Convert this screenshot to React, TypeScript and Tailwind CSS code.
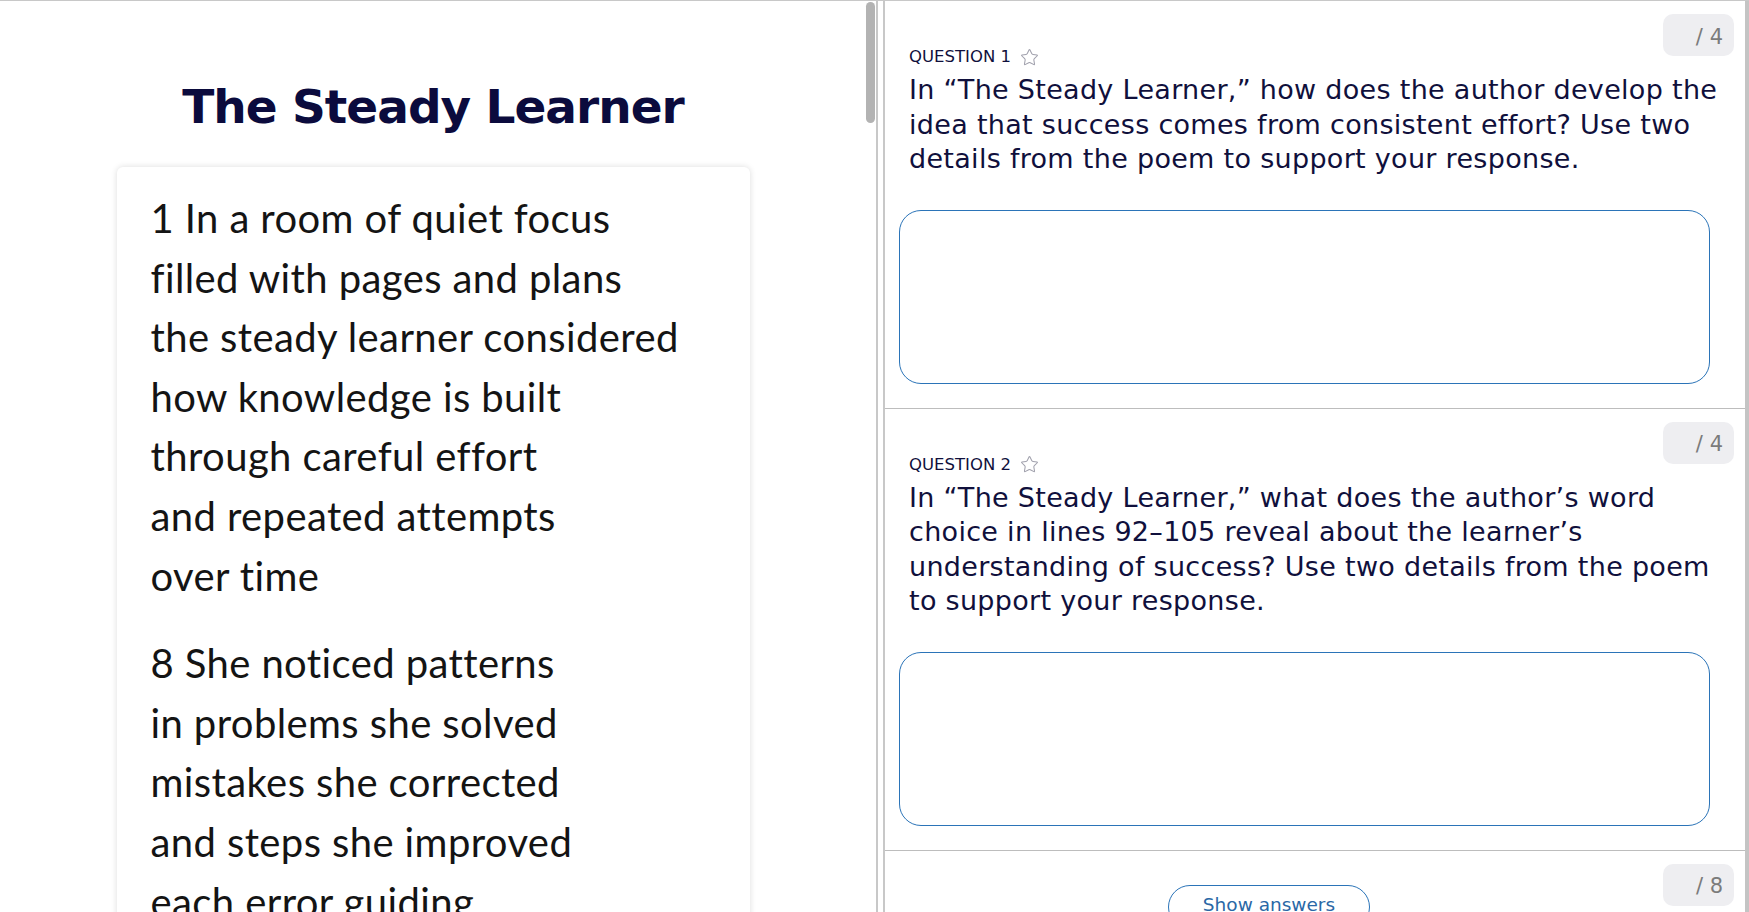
import React from "react";
import { Star } from "lucide-react";

const stanza1 = [
  "1 In a room of quiet focus",
  "filled with pages and plans",
  "the steady learner considered",
  "how knowledge is built",
  "through careful effort",
  "and repeated attempts",
  "over time",
];

const stanza2 = [
  "8 She noticed patterns",
  "in problems she solved",
  "mistakes she corrected",
  "and steps she improved",
  "each error guiding",
  "her toward mastery",
];

function Badge({ total }: { total: number }) {
  return (
    <div className="absolute right-[11px] top-[13px] flex h-[42px] w-[71px] items-center justify-end rounded-[10px] bg-[#eeeef1] pr-[11px] pt-[5px] text-[21px] text-[#7b7b7b]">
      / {total}
    </div>
  );
}

function Question({ n, lines }: { n: number; lines: string[] }) {
  return (
    <section className="relative border-b border-[#bdbdbd] pl-[14px] pr-[35px] pt-[45px] pb-[24px]">
      <Badge total={4} />
      <div className="pl-[10px]">
        <div className="flex h-[22px] items-center gap-[9px] text-[16.5px] leading-[22px] text-[#10103c]">
          <span>QUESTION {n}</span>
          <Star size={19} strokeWidth={1.3} color="#a0a0ac" />
        </div>
        <p className="mt-[5px] whitespace-nowrap text-[27px] leading-[34.5px] tracking-[0.3px] text-[#10103c]">
          {lines.map((l, i) => (
            <React.Fragment key={i}>
              {l}
              {i < lines.length - 1 && <br />}
            </React.Fragment>
          ))}
        </p>
      </div>
      <div className="mt-[33px] h-[174px] rounded-[22px] border border-[#2b74b8] bg-white" />
    </section>
  );
}

export default function App() {
  return (
    <div className="flex h-[912px] w-[1749px] overflow-hidden border-t border-[#c8c8c8] bg-white">
      {/* Left reading pane */}
      <div className="flex w-[866px] shrink-0 flex-col items-center">
        <h1 className="mt-[76px] text-[47px] font-bold leading-[60px] tracking-[-1px] text-[#0b0b3d] [font-family:'DejaVu_Sans',sans-serif]">
          The Steady Learner
        </h1>
        <div className="mt-[30px] w-[633px] flex-1 rounded-[6px] bg-white pl-[34px] pt-[22px] shadow-[0_0_6px_rgba(0,0,0,0.14)] [font-family:Lato,sans-serif] [font-variant-ligatures:none]">
          <div className="text-[40px] leading-[59.6px] tracking-[0.4px] text-[#141414]">
            {stanza1.map((l) => (
              <div key={l}>{l}</div>
            ))}
          </div>
          <div className="mt-[28px] text-[40px] leading-[59.6px] tracking-[0.4px] text-[#141414]">
            {stanza2.map((l) => (
              <div key={l}>{l}</div>
            ))}
          </div>
        </div>
      </div>

      {/* Left pane scrollbar */}
      <div className="flex w-[10px] shrink-0 flex-col">
        <div className="mt-[1px] h-[121px] w-[9px] rounded-full bg-[#b3b3b3]" />
      </div>
      <div className="w-[2px] shrink-0 bg-[#c8c8c8]" />
      <div className="w-[5px] shrink-0" />
      <div className="w-[2px] shrink-0 bg-[#c8c8c8]" />

      {/* Right question pane */}
      <div className="flex min-w-0 flex-1 flex-col [font-family:'DejaVu_Sans',sans-serif]">
        <Question
          n={1}
          lines={[
            "In “The Steady Learner,” how does the author develop the",
            "idea that success comes from consistent effort? Use two",
            "details from the poem to support your response.",
          ]}
        />
        <Question
          n={2}
          lines={[
            "In “The Steady Learner,” what does the author’s word",
            "choice in lines 92–105 reveal about the learner’s",
            "understanding of success? Use two details from the poem",
            "to support your response.",
          ]}
        />
        <section className="relative pl-[283px] pt-[34px]">
          <div className="absolute right-[11px] top-[13px] flex h-[42px] w-[71px] items-center justify-end rounded-[10px] bg-[#eeeef1] pr-[11px] pt-[5px] text-[21px] text-[#7b7b7b]">
            / 8
          </div>
          <button className="h-[44px] w-[202px] rounded-full border border-[#2b74b8] bg-white pb-[4px] text-[18.5px] text-[#2a68a6]">
            Show answers
          </button>
        </section>
      </div>

      <div className="w-[4px] shrink-0 bg-[#c4c4c4]" />
    </div>
  );
}
